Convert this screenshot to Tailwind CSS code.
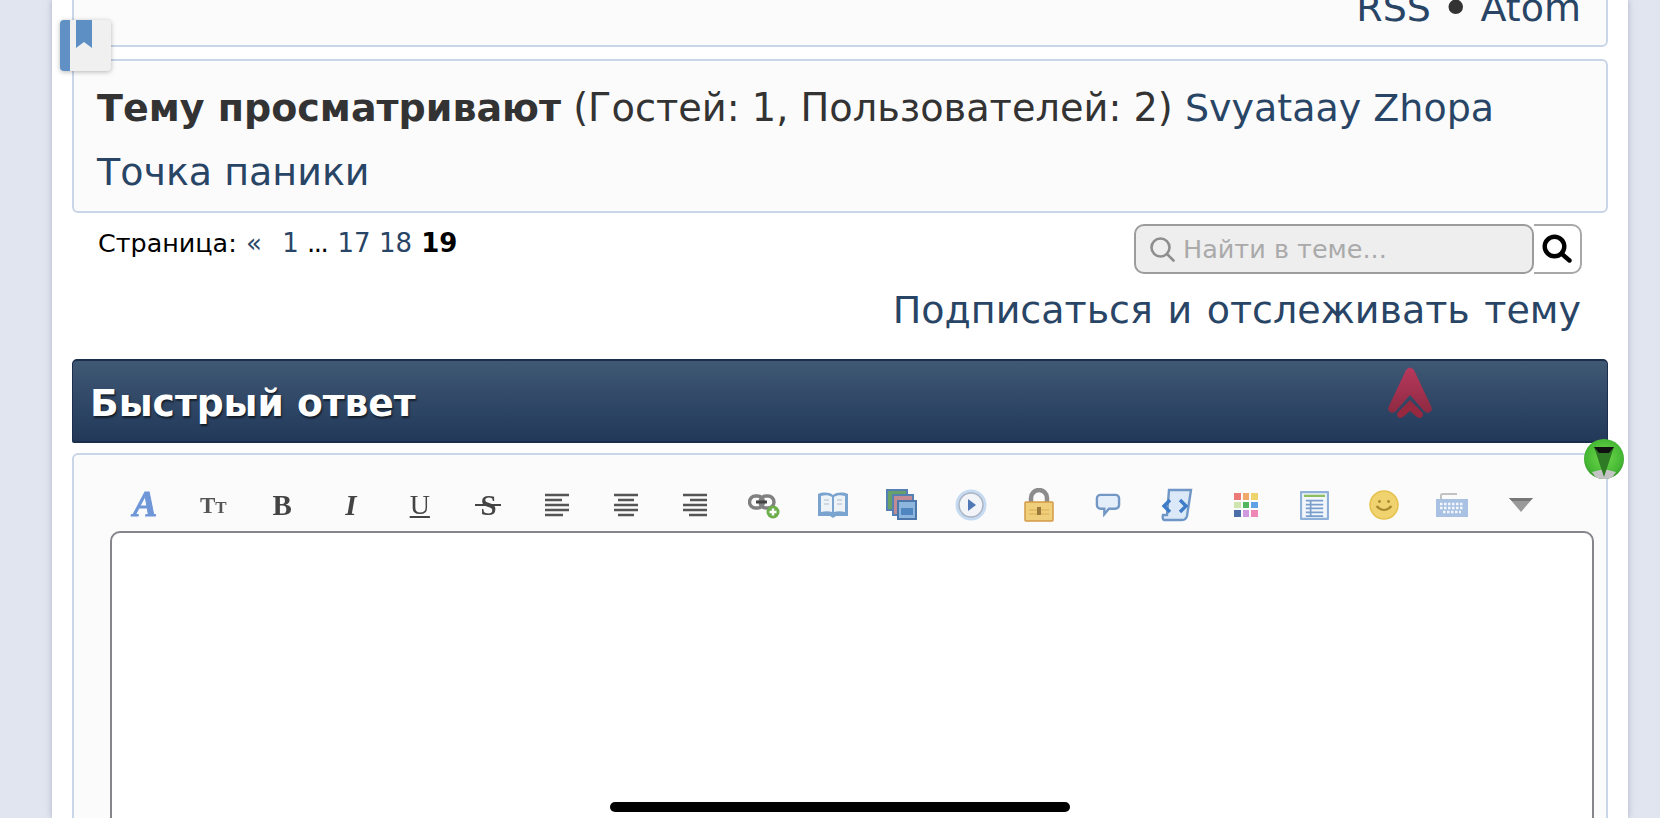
<!DOCTYPE html>
<html lang="ru">
<head>
  <meta charset="UTF-8">
  <title>Быстрый ответ</title>
  <script src="https://cdn.jsdelivr.net/npm/@tailwindcss/browser@4"></script>
</head>
<body class="bg-[#e1e5ef] h-[818px] overflow-hidden font-['DejaVu_Sans',sans-serif]">

  <div class="ml-[52px] w-[1576px] h-[818px] overflow-hidden bg-white px-[20px] shadow-[0_0_6px_rgba(120,130,160,0.5)]">

    <!-- RSS panel, cut off by the top of the screen -->
    <div class="-mt-[30px] h-[77px] bg-[#fbfbfb] border-2 border-[#c8d6e8] rounded-[6px] flex items-end justify-end pr-[25px] pb-[17px] text-[38px] leading-[40px] text-[#294566]">
      <span>RSS</span><span class="mx-[10px] text-[50px] leading-[40px] text-[#333]">•</span><span>Atom</span>
    </div>

    <!-- Who is viewing -->
    <div class="mt-[12px] h-[154px] bg-[#fbfbfb] border-2 border-[#c8d6e8] rounded-[6px] px-[23px] pt-[15px] text-[38px] leading-[64px] text-[#333]">
      <b>Тему просматривают</b> <span class="text-[38.3px]">(Гостей: 1, Пользователей: 2)</span> <a class="text-[#294566] whitespace-nowrap">Svyataay Zhopa</a> <a class="text-[#294566] whitespace-nowrap">Точка паники</a>
    </div>

    <!-- Pagination and search -->
    <div class="flex justify-between pr-[26px] pt-[11px]">
      <div class="pl-[26px] text-[26px] leading-[38px] text-black">
        <span class="text-[25.4px]">Страница:</span> <a class="text-[#294566] ml-[1px]">«</a> <a class="text-[#294566] ml-[12px]">1</a> <span class="tracking-[-1.5px] mr-[2px]">...</span> <a class="text-[#294566]">17</a> <a class="text-[#294566]">18</a> <b class="ml-[1px]">19</b>
      </div>
      <div class="flex">
        <div class="w-[400px] h-[50px] bg-[#eeeeee] border-2 border-[#9c9c9c] rounded-[10px] flex items-center pl-[14px] text-[25.5px] text-[#aaaaaa]">
          <svg class="w-[25px] h-[25px] mr-[8px]" viewBox="0 0 25 25" fill="none" stroke="#8e8e8e" stroke-width="2.6" stroke-linecap="round"><circle cx="10.5" cy="10.5" r="9"/><path d="M17 17l6.5 6.5"/></svg>
          <span>Найти в теме...</span>
        </div>
        <div class="w-[48px] h-[50px] bg-white border-2 border-l-0 border-[#a8a8a8] rounded-r-[10px] flex items-center justify-center">
          <svg class="w-[30px] h-[30px]" viewBox="0 0 30 30" fill="none" stroke="#000" stroke-width="4.4" stroke-linecap="round"><circle cx="12.5" cy="12.5" r="9.8"/><path d="M20 20l7.5 6.5"/></svg>
        </div>
      </div>
    </div>

    <div class="flex justify-end pr-[27px] mt-[11px] text-[38px] [word-spacing:2.5px] leading-[50px] text-[#294566]">
      <a>Подписаться и отслеживать тему</a>
    </div>

    <!-- Quick reply header -->
    <div class="mt-[24px] h-[84px] rounded-t-[5px] rounded-b-[2px] border border-[#1b2f4d] border-t-2 border-b-2 bg-gradient-to-b from-[#3f5873] to-[#22395a] flex items-center pl-[17px] pt-[5px] text-[37.6px] font-bold text-white [text-shadow:1px_2px_2px_rgba(0,0,0,0.6)]">
      Быстрый ответ
    </div>

    <!-- Editor panel -->
    <div class="mt-[10px] h-[400px] bg-[#fbfbfb] border-2 border-[#c8d6e8] rounded-t-[6px] pl-[36px] pr-[12px] pt-[32px]">
      <div class="flex items-center h-[36px] text-[#444] font-['Liberation_Serif',serif] blur-[0.6px]">
        <span class="w-[68.85px] flex justify-center pl-[1px] -mt-[3px]">
          <span class="text-[36px] leading-none font-bold italic text-[#6f97d8] [-webkit-text-stroke:1px_#6f97d8]">A</span>
        </span>
        <span class="w-[68.85px] flex justify-center items-baseline font-bold text-[#555]">
          <span class="text-[23px] leading-none">T</span><span class="text-[17px] leading-none">T</span>
        </span>
        <span class="w-[68.85px] flex justify-center text-[29px] leading-none font-bold">B</span>
        <span class="w-[68.85px] flex justify-center text-[29px] leading-none font-bold italic">I</span>
        <span class="w-[68.85px] flex justify-center text-[28px] leading-none underline decoration-2 underline-offset-2">U</span>
        <span class="w-[68.85px] flex justify-center relative text-[29px] leading-none font-bold">
          S<i class="absolute left-[21px] top-[13px] w-[26px] h-[2px] bg-[#444]"></i>
        </span>

        <!-- align left -->
        <span class="w-[68.85px] flex justify-center">
          <svg class="w-[26px] h-[24px]" viewBox="0 0 26 24" stroke="#555" stroke-width="2.6"><path d="M1 2h24M1 7h17M1 12h24M1 17h24M1 22h18"/></svg>
        </span>
        <!-- align center -->
        <span class="w-[68.85px] flex justify-center">
          <svg class="w-[26px] h-[24px]" viewBox="0 0 26 24" stroke="#555" stroke-width="2.6"><path d="M1 2h24M5 7h16M1 12h24M1 17h24M5 22h16"/></svg>
        </span>
        <!-- align right -->
        <span class="w-[68.85px] flex justify-center">
          <svg class="w-[26px] h-[24px]" viewBox="0 0 26 24" stroke="#555" stroke-width="2.6"><path d="M1 2h24M8 7h17M1 12h24M1 17h24M7 22h18"/></svg>
        </span>
        <!-- link -->
        <span class="w-[68.85px] flex justify-center">
          <svg class="w-[32px] h-[28px]" viewBox="0 0 32 28"><rect x="1.5" y="5" width="14" height="12" rx="6" fill="none" stroke="#808080" stroke-width="3.4"/><rect x="12" y="5" width="14" height="12" rx="6" fill="none" stroke="#808080" stroke-width="3.4"/><path d="M8 11h11" stroke="#444" stroke-width="3"/><circle cx="25" cy="21" r="6.5" fill="#6cae4c"/><path d="M25 17.5v7M21.5 21h7" stroke="#fff" stroke-width="2.4"/></svg>
        </span>
        <!-- book -->
        <span class="w-[68.85px] flex justify-center">
          <svg class="w-[32px] h-[28px]" viewBox="0 0 32 28"><path d="M1 3c5-2 11-2 15 1 4-3 10-3 15-1v22H19l-3 2-3-2H1z" fill="#7ba3d0"/><path d="M4 5c4-1 8-1 11 1v15c-3-1-7-1-11 0zM28 5c-4-1-8-1-11 1v15c3-1 7-1 11 0z" fill="#eef3f8"/><path d="M7 9h5M7 13h5M20 9h5M20 13h5" stroke="#c6ced8" stroke-width="1.5"/></svg>
        </span>
        <!-- images -->
        <span class="w-[68.85px] flex justify-center">
          <svg class="w-[32px] h-[32px]" viewBox="0 0 32 32"><rect x="1" y="1" width="20" height="20" fill="#68a06a" stroke="#5580b4" stroke-width="2"/><rect x="7" y="6" width="20" height="20" fill="#c28a92" stroke="#5580b4" stroke-width="2"/><rect x="12" y="12" width="18" height="18" fill="#8db6de" stroke="#4d77aa" stroke-width="2"/><rect x="15" y="19" width="12" height="7" fill="#4f86c0"/></svg>
        </span>
        <!-- media -->
        <span class="w-[68.85px] flex justify-center">
          <svg class="w-[32px] h-[32px]" viewBox="0 0 32 32"><circle cx="16" cy="16" r="15.5" fill="#c6daf2"/><circle cx="16" cy="16" r="12" fill="#f2f4f8" stroke="#aab4c2" stroke-width="1.5"/><path d="M13 10l8 6-8 6z" fill="#4f78b4"/></svg>
        </span>
        <!-- lock -->
        <span class="w-[68.85px] flex justify-center">
          <svg class="w-[30px] h-[34px]" viewBox="0 0 30 34"><path d="M7 16V10a8 8 0 0 1 16 0v6" fill="none" stroke="#8c8c8c" stroke-width="4.5"/><rect x="1" y="14" width="28" height="19" rx="1" fill="#efcf7c" stroke="#d39a45" stroke-width="1.5"/><path d="M5 22h20M5 26h20" stroke="#e2b95e" stroke-width="1.5"/><rect x="13" y="19" width="4" height="8" fill="#9a7a3a"/></svg>
        </span>
        <!-- quote -->
        <span class="w-[68.85px] flex justify-center">
          <svg class="w-[26px] h-[24px]" viewBox="0 0 28 26"><path d="M6 2h16a4 4 0 0 1 4 4v7a4 4 0 0 1-4 4h-7l-5 6v-6H6a4 4 0 0 1-4-4V6a4 4 0 0 1 4-4z" fill="#e4eefb" stroke="#7498c6" stroke-width="2.6"/></svg>
        </span>
        <!-- code -->
        <span class="w-[68.85px] flex justify-center">
          <svg class="w-[32px] h-[34px]" viewBox="0 0 32 34"><path d="M8 2h22l-4 26q-1 4-5 4H3q-2-1-1-5h4z" fill="#dbe8f7" stroke="#6f96c6" stroke-width="2.4"/><path d="M9 12l-6 6 6 6M19 12l6 6-6 6" fill="none" stroke="#3f7cc8" stroke-width="3.4"/></svg>
        </span>
        <!-- colors -->
        <span class="w-[68.85px] flex justify-center">
          <span class="grid grid-cols-3 gap-[2px] w-[24px] h-[24px]">
            <i class="bg-[#ec7a78]"></i><i class="bg-[#f0a868]"></i><i class="bg-[#efd46e]"></i>
            <i class="bg-[#cfe4ae]"></i><i class="bg-[#52b65e]"></i><i class="bg-[#5ea4e4]"></i>
            <i class="bg-[#4c6ea8]"></i><i class="bg-[#cf9ade]"></i><i class="bg-[#ee86b6]"></i>
          </span>
        </span>
        <!-- table -->
        <span class="w-[68.85px] flex justify-center">
          <svg class="w-[29px] h-[29px]" viewBox="0 0 30 30"><rect x="1" y="1" width="28" height="28" rx="1" fill="#f3f7fc" stroke="#8fb0d8" stroke-width="2.4"/><path d="M4 5h22" stroke="#8bbf60" stroke-width="2.4"/><path d="M6 10h18M6 14h18M6 18h18M6 22h18M6 26h18M11 9v18" stroke="#7a9ecb" stroke-width="1.8"/></svg>
        </span>
        <!-- smiley -->
        <span class="w-[68.85px] flex justify-center">
          <svg class="w-[30px] h-[30px]" viewBox="0 0 30 30"><circle cx="15" cy="15" r="14" fill="#f0d26e" stroke="#e6c250" stroke-width="1.5"/><circle cx="10.5" cy="11.5" r="1.4" fill="#a88a30"/><circle cx="19.5" cy="11.5" r="1.4" fill="#a88a30"/><path d="M7.5 16q7.5 8 15 0" fill="none" stroke="#a88a30" stroke-width="2.2"/></svg>
        </span>
        <!-- keyboard -->
        <span class="w-[68.85px] flex justify-center">
          <svg class="w-[32px] h-[26px]" viewBox="0 0 32 26"><path d="M5 7V3q0-1 2-1h14" fill="none" stroke="#c2c2c2" stroke-width="2"/><rect x="0" y="7" width="32" height="18" fill="#a9c2e3"/><path d="M4 12h24M4 16h24M7 20h18" stroke="#f4f7fb" stroke-width="2.4" stroke-dasharray="2.5 1.5"/></svg>
        </span>
        <!-- more -->
        <span class="w-[68.85px] flex justify-center">
          <svg class="w-[26px] h-[16px]" viewBox="0 0 26 16"><path d="M1 1h24L13 15z" fill="#9a9a9a"/><path d="M1 1h24l-3 3H4z" fill="#777"/></svg>
        </span>
      </div>

      <!-- Textarea -->
      <div class="mt-[8px] h-[400px] bg-white border-2 border-[#85858c] rounded-t-[10px]"></div>
    </div>
  </div>

  <!-- Bookmark app icon over the page -->
  <div class="absolute left-[60px] top-[20px] w-[51px] h-[51px] rounded-[4px] bg-[#f0f0f0] shadow-[0_1px_5px_rgba(0,0,0,0.28)] overflow-hidden">
    <div class="absolute left-0 top-0 w-[10px] h-full bg-[#6090c4]"></div>
    <svg class="absolute left-[16px] top-0 w-[16px] h-[28px]" viewBox="0 0 16 28"><path d="M0 0h16v28l-8-6-8 6z" fill="#5e8fc4"/></svg>
  </div>

  <!-- Red arrow badge -->
  <svg class="absolute left-[1388px] top-[367px] w-[44px] h-[54px]" viewBox="0 0 44 54">
    <defs>
      <linearGradient id="redArrow" x1="0" y1="0" x2="0" y2="1">
        <stop offset="0" stop-color="#b8385c"/><stop offset="1" stop-color="#8e2a42"/>
      </linearGradient>
    </defs>
    <path d="M18 3q4-5 8 0l17 36q2 4-1 6t-6-1L22 28 8 44q-3 3-6 1t-1-6z" fill="url(#redArrow)"/>
    <path d="M22 33l12 12q2 3 0 5t-5 0l-7-6-7 6q-3 2-5 0t0-5z" fill="#96293f"/>
  </svg>

  <!-- Green round marker -->
  <div class="absolute left-[1584px] top-[439px] w-[40px] h-[40px] rounded-full bg-[radial-gradient(circle_at_50%_45%,#6fdc4a,#45b634_62%,#1c5a18)] overflow-hidden">
    <svg class="w-[40px] h-[40px]" viewBox="0 0 40 40"><path d="M8 33l12-3 12 3-5 7H13z" fill="#c4c4c4"/><path d="M10 8h20l-10 30z" fill="#2f7a25"/><path d="M10 8h20l-5 6H15z" fill="#111"/></svg>
  </div>

  <!-- iOS home indicator -->
  <div class="absolute left-[610px] top-[802px] w-[460px] h-[10px] rounded-full bg-black"></div>

</body>
</html>
